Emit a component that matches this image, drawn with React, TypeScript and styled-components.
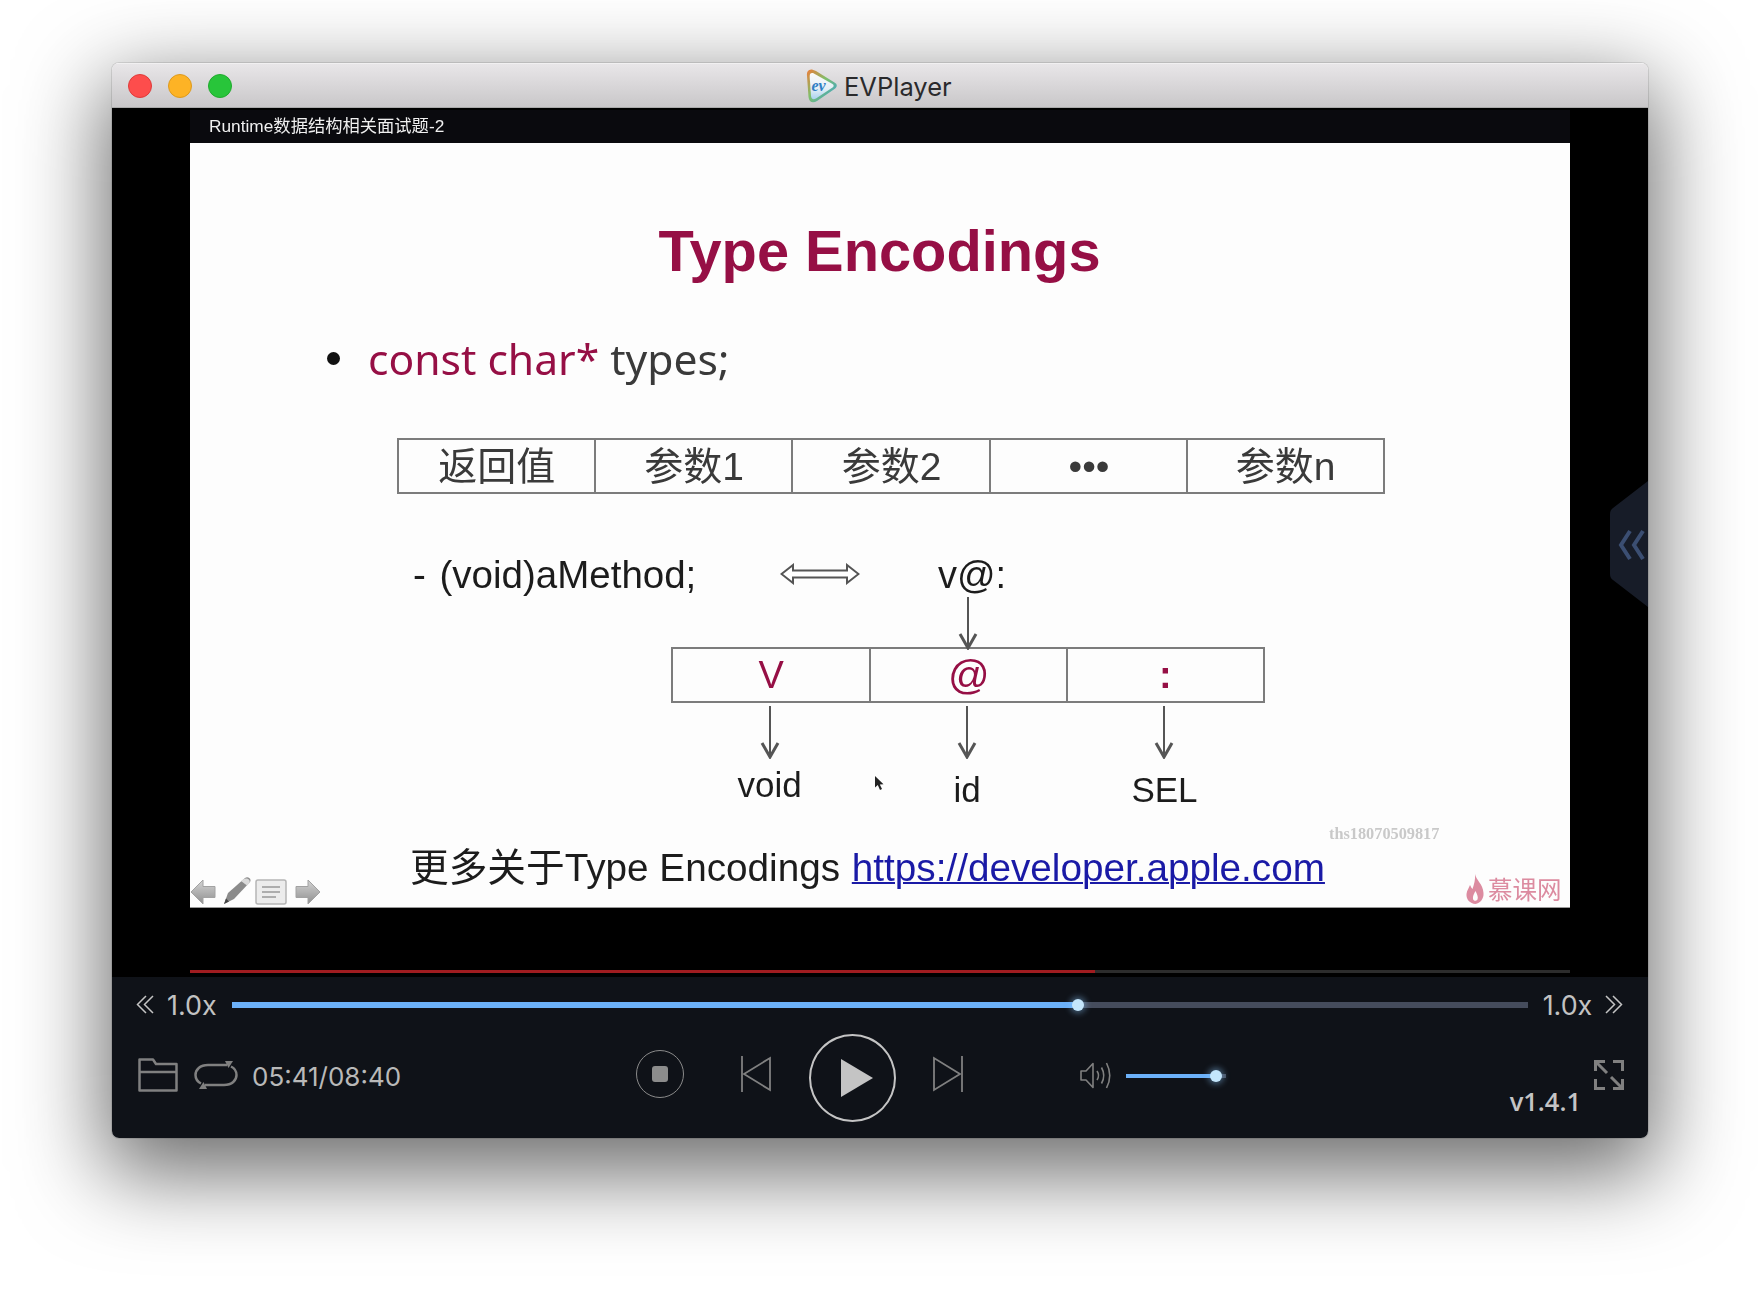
import React from 'react'
import styled, {createGlobalStyle} from 'styled-components'

const SANS = `"Liberation Sans", "Noto Sans CJK SC", sans-serif`
const UI = `Inter, "Noto Sans CJK SC", sans-serif`
const WINE = '#960f45'

const GlobalStyle = createGlobalStyle`
  html, body {
    margin: 0;
    background: #fff;
  }
  #root {
    height: 1298px;
    overflow: hidden;
  }
`

const Win = styled.div`
  position: relative;
  width: 1536px;
  height: 1075px;
  margin: 63px 0 0 112px;
  border-radius: 7px;
  overflow: hidden;
  display: flex;
  flex-direction: column;
  box-shadow: 0 0 0 1px rgba(0, 0, 0, 0.1), 0 28px 85px 8px rgba(0, 0, 0, 0.58);
`
const TitleBar = styled.div`
  position: relative;
  height: 45px;
  flex: none;
  box-sizing: border-box;
  background: linear-gradient(#e8e6e8, #c9c7c9);
  border-top: 1px solid #f1f0f1;
  border-bottom: 1px solid #aaa;
  display: flex;
  align-items: center;
  padding-left: 16px;
`
const Light = styled.span<{$bg: string; $edge: string}>`
  width: 24px;
  height: 24px;
  box-sizing: border-box;
  border-radius: 50%;
  background: ${p => p.$bg};
  border: 1px solid ${p => p.$edge};
  margin-right: 16px;
`
const TitleCenter = styled.div`
  position: absolute;
  left: 694px;
  top: 5px;
  display: flex;
  align-items: center;
  gap: 7px;
`
const TitleText = styled.span`
  font: 400 25.5px ${UI};
  color: #2a2a2c;
`

const Stage = styled.div`
  position: relative;
  height: 869px;
  flex: none;
  background: #000;
  padding: 2px 78px 0;
  box-sizing: border-box;
`
const Strip = styled.div`
  height: 33px;
  background: #0a0a0e;
  color: #f0f0f0;
  font: 400 17.3px/33px ${SANS};
  padding-left: 19px;
  filter: blur(0.3px);
`
const Slide = styled.div`
  position: relative;
  height: 765px;
  box-sizing: border-box;
  background: #fdfdfd;
  border-bottom: 1px solid #999;
  overflow: hidden;
  padding-top: 76px;
  > * {
    filter: blur(0.45px);
  }
`
const SlideTitle = styled.div`
  font: 700 57.8px/64px ${SANS};
  color: ${WINE};
  text-align: center;
  padding-right: 1px;
`
const BulletRow = styled.div`
  display: flex;
  align-items: center;
  margin: 45px 0 0 137px;
  font: 400 42.6px/60px "Noto Sans", sans-serif;
  color: #3a3a3a;
`
const Dot = styled.span`
  width: 13px;
  height: 13px;
  border-radius: 50%;
  background: #111;
  margin-right: 28px;
`
const Wine = styled.span`
  color: ${WINE};
`
const CellTable = styled.div<{$cols: number; $left: number}>`
  display: grid;
  grid-template-columns: 196.5px repeat(${p => p.$cols - 2}, 197.4px) 1fr;
  width: ${p => p.$cols * 197.4 + 1.5}px;
  height: 56px;
  box-sizing: border-box;
  margin-left: ${p => p.$left}px;
  border: 2px solid #7c7c7c;
`
const Cell = styled.div<{$wine?: boolean}>`
  display: flex;
  align-items: center;
  justify-content: center;
  font: 400 ${p => (p.$wine ? 38 : 39)}px/1 ${SANS};
  color: ${p => (p.$wine ? WINE : '#3a3a3a')};
  & + & {
    border-left: 2px solid #7c7c7c;
    margin-left: -1px;
  }
`
const AtSign = styled.span`
  font-size: 41px;
`
const HeaderCells = styled.div`
  margin-top: 50px;
`
const MethodRow = styled.div`
  display: grid;
  grid-template-columns: 367px 158px auto;
  align-items: center;
  margin: 59px 0 0 223px;
  font: 400 38px/44px ${SANS};
  color: #1c1c1c;
`
const MethodText = styled.span`
  font-size: 38.5px;
  word-spacing: 3px;
`
const DoubleArrow = styled.svg`
  margin-top: -2px;
`
const Pointer = styled.svg`
  display: block;
  margin-left: 768px;
  margin-bottom: -3px;
  position: relative;
  z-index: 1;
`
const Columns = styled.div`
  display: grid;
  grid-template-columns: repeat(3, 197.4px);
  margin-left: 481px;
`
const Column = styled.div`
  display: flex;
  flex-direction: column;
  align-items: center;
  padding-top: 3px;
`
const ArrowSvg = styled.svg`
  display: block;
`
const DownLabel = styled.div<{$gap: number}>`
  font: 400 35px/40px ${SANS};
  color: #1c1c1c;
  margin-top: ${p => p.$gap}px;
`
const Footer = styled.div`
  margin: 36px 0 0 220px;
  font: 400 38.7px/44px ${SANS};
  color: #1c1c1c;
`
const Link = styled.span`
  color: #1a1aa6;
  text-decoration: underline;
  text-decoration-thickness: 2px;
  margin-left: 1px;
`
const NavIcons = styled.div`
  position: absolute;
  left: 0;
  bottom: 2px;
  display: flex;
  align-items: flex-end;
`
const NavArrowIcon = styled.svg<{$flip?: boolean}>`
  transform: ${p => (p.$flip ? 'scaleX(-1)' : 'none')};
`
const PenIcon = styled.svg`
  margin: 0 2px 0 6px;
`
const ListIcon = styled.svg`
  margin-right: 7px;
`
const Watermark = styled.div`
  position: absolute;
  left: 1139px;
  top: 682px;
  font: 700 16.3px/18px "Liberation Serif", serif;
  color: #c9c9c9;
`
const Brand = styled.div`
  position: absolute;
  left: 1276px;
  top: 731px;
  display: flex;
  align-items: center;
  gap: 4px;
  font: 400 24.5px/30px "Noto Sans CJK SC", sans-serif;
  color: #dc8ba0;
`
const Cursor = styled.svg`
  position: absolute;
  left: 684px;
  top: 632px;
`
const ScrubTrack = styled.div`
  height: 3px;
  margin-top: 62px;
  background: #2c2c2c;
`
const ScrubFill = styled.div`
  height: 100%;
  background: #a01c20;
`
const SideTab = styled.svg`
  position: absolute;
  right: 0;
  top: 373px;
`

const Panel = styled.div`
  flex: 1;
  background: #0f1218;
  color: #c2c2c2;
  padding-top: 14px;
`
const SpeedRow = styled.div`
  display: flex;
  align-items: center;
  height: 28px;
  padding: 0 24px;
`
const Speed = styled.span`
  font: 400 26.9px/28px ${UI};
  margin: 0 12px;
`
const Track = styled.div`
  position: relative;
  height: 6px;
  background: #454c5c;
`
const SeekTrack = styled(Track)`
  width: 1296px;
  margin: 0 3px;
`
const VolumeTrack = styled(Track)`
  width: 100px;
  height: 4px;
  margin-left: 14px;
  margin-bottom: 4px;
`
const TrackFill = styled.div`
  height: 100%;
  background: #6cb1f9;
`
const Knob = styled.span`
  position: absolute;
  top: 50%;
  width: 12px;
  height: 12px;
  margin: -6.5px 0 0 -6px;
  border-radius: 50%;
  background: #c4e6fb;
  box-shadow: 0 0 6px 2px rgba(140, 200, 250, 0.45);
`
const ControlRow = styled.div`
  display: flex;
  align-items: center;
  height: 88px;
  margin-top: 15px;
  padding: 0 24px 0 26px;
`
const FileGroup = styled.div`
  display: flex;
  align-items: center;
  margin-bottom: 6px;
`
const FolderIcon = styled.svg`
  margin-right: 16px;
`
const Clock = styled.span`
  font: 400 26px/30px ${UI};
  margin: 3px 1px 0 14px;
  color: #b9b9b9;
  width: 148px;
  white-space: nowrap;
`
const Transport = styled.div`
  display: flex;
  align-items: center;
  margin-left: 235px;
`
const StopButton = styled.div`
  width: 48px;
  height: 48px;
  box-sizing: border-box;
  border: 1.5px solid #8a8a8a;
  border-radius: 50%;
  display: flex;
  align-items: center;
  justify-content: center;
  margin-bottom: 8px;
`
const StopSquare = styled.span`
  width: 16px;
  height: 16px;
  border-radius: 3px;
  background: #8c8c8c;
`
const PlayButton = styled.div`
  width: 87px;
  height: 88px;
  margin: 0 37px 0 38px;
  box-sizing: border-box;
  border: 2.5px solid #c4c4c4;
  border-radius: 50%;
  display: flex;
  align-items: center;
  justify-content: center;
  padding-left: 8px;
`
const SkipIcon = styled.svg<{$left?: number}>`
  margin-left: ${p => p.$left || 0}px;
  margin-bottom: 8px;
`
const VolumeGroup = styled.div`
  display: flex;
  align-items: center;
  margin-left: 117px;
`
const VolumeIcon = styled.svg`
  margin-bottom: 6px;
`
const RightGroup = styled.div`
  margin-left: auto;
  display: flex;
  gap: 13px;
  align-items: flex-start;
  align-self: flex-start;
  padding-top: 26px;
`
const Version = styled.span`
  font: 600 25.5px/28px "Open Sans", sans-serif;
  color: #c4c4c4;
  margin-top: 27px;
`

const Chevrons: React.FC<{dir: 'left' | 'right'}> = ({dir}) => (
  <svg width="19" height="20" viewBox="0 0 19 20" fill="none" stroke="#c4c4c4" strokeWidth="1.5">
    <g transform={dir === 'right' ? 'matrix(-1 0 0 1 19 0)' : undefined}>
      <path d="M10 1 L1.5 9.5 L10 18" />
      <path d="M17 1 L8.5 9.5 L17 18" />
    </g>
  </svg>
)

const DownArrow: React.FC<{h: number}> = ({h}) => (
  <ArrowSvg width="20" height={h} viewBox={`0 0 20 ${h}`} fill="none" stroke="#555">
    <path d={`M10 0 V${h - 2}`} strokeWidth="2" />
    <path d={`M2 ${h - 16} L10 ${h - 2} L18 ${h - 16}`} strokeWidth="3" />
  </ArrowSvg>
)

const AppLogo = () => (
  <svg width="31" height="34" viewBox="0 0 31 34">
    <defs>
      <linearGradient id="logoEdge" x1="0" y1="0" x2="1" y2="1">
        <stop offset="0" stopColor="#ee7d3a" />
        <stop offset="0.45" stopColor="#7fbf6a" />
        <stop offset="1" stopColor="#2f9fe0" />
      </linearGradient>
      <linearGradient id="logoFace" x1="0" y1="0" x2="0" y2="1">
        <stop offset="0" stopColor="#fbfbfb" />
        <stop offset="0.6" stopColor="#e4eef6" />
        <stop offset="1" stopColor="#a9d2ee" />
      </linearGradient>
    </defs>
    <path d="M6 0.5 C2 0 0.5 3 1 7 L2.5 28 C3 33.5 7 34.5 11 32 L28.5 20 C31.5 18 31.5 15 28.5 13.5 L10 2 Z" fill="url(#logoEdge)" />
    <path d="M7 4 C4.5 3.5 3.5 5 3.7 8 L5 27 C5.5 30.5 7.5 31 10 29.5 L26.5 18.5 C28 17.5 28 16 26.5 15 Z" fill="url(#logoFace)" />
    <text x="5.5" y="22" fontFamily="Liberation Serif, serif" fontStyle="italic" fontWeight="700" fontSize="16" fill="#2f7fc4">ev</text>
  </svg>
)

const NavArrow: React.FC<{flip?: boolean}> = ({flip}) => (
  <NavArrowIcon $flip={flip} width="27" height="26" viewBox="0 0 27 26">
    <defs>
      <linearGradient id="navArrow" x1="0" y1="0" x2="0" y2="1">
        <stop offset="0" stopColor="#d4d4d4" />
        <stop offset="1" stopColor="#8f8f8f" />
      </linearGradient>
    </defs>
    <path d="M1 13 L13 1 V7.5 H25 V18.5 H13 V25 Z" fill="url(#navArrow)" stroke="#a2a2a2" />
  </NavArrowIcon>
)

const Pen = () => (
  <PenIcon width="30" height="29" viewBox="0 0 30 29">
    <path d="M1 28 L5 17 L22 2 C25 0 29 3 27 6 L11 23 Z" fill="#8b8b8b" />
    <path d="M20 3.5 C23 1 28 3 26.5 7 L24 9.5 L18 5 Z" fill="#d9d9d9" />
    <path d="M1 28 L3 22.5 L6 25.5 Z" fill="#444" />
  </PenIcon>
)

const NavList = () => (
  <ListIcon width="32" height="26" viewBox="0 0 32 26">
    <rect x="1" y="1" width="30" height="24" rx="2" fill="#ececec" stroke="#b5b5b5" strokeWidth="1.5" />
    <path d="M7 8 H25 M7 13 H25 M7 18 H21" stroke="#adadad" strokeWidth="2" />
  </ListIcon>
)

const Flame = () => (
  <svg width="18" height="30" viewBox="0 0 18 30">
    <path
      d="M9 0 C10 6 17 10 17.5 19 C18 25 14 29 9.5 30 C4 29.5 0 25.5 0.5 20 C1 16 3 14 4 11 C5 13 5.5 14 6.5 15 C8 10 9.5 6 9 0 Z M9.5 17 C8 20 6.5 22 7 25 C7.5 27 10 27.5 11.5 25.5 C12.5 23 11 20 9.5 17 Z"
      fill="#dc8ba0"
      fillRule="evenodd"
    />
  </svg>
)

export default function App() {
  return (
    <>
      <GlobalStyle />
      <Win>
        <TitleBar>
          <Light $bg="#fd4d4c" $edge="#df3b3a" />
          <Light $bg="#fdb325" $edge="#dd9a1d" />
          <Light $bg="#28c53a" $edge="#20ab2e" />
          <TitleCenter>
            <AppLogo />
            <TitleText>EVPlayer</TitleText>
          </TitleCenter>
        </TitleBar>

        <Stage>
          <Strip>Runtime数据结构相关面试题-2</Strip>
          <Slide>
            <SlideTitle>Type Encodings</SlideTitle>
            <BulletRow>
              <Dot />
              <span>
                <Wine>const char*</Wine> types;
              </span>
            </BulletRow>
            <HeaderCells>
              <CellTable $cols={5} $left={206.5}>
                <Cell>返回值</Cell>
                <Cell>参数1</Cell>
                <Cell>参数2</Cell>
                <Cell>•••</Cell>
                <Cell>参数n</Cell>
              </CellTable>
            </HeaderCells>
            <MethodRow>
              <MethodText>- (void)aMethod;</MethodText>
              <DoubleArrow width="80" height="22" viewBox="0 0 80 22" fill="#fff" stroke="#555" strokeWidth="2">
                <path d="M1.5 11 L13 2 V7.5 H67 V2 L78.5 11 L67 20 V14.5 H13 V20 Z" />
              </DoubleArrow>
              <span>v@:</span>
            </MethodRow>
            <Pointer width="20" height="53" viewBox="0 0 20 53" fill="none" stroke="#555">
              <path d="M10 0 V51" strokeWidth="2" />
              <path d="M2 37 L10 51 L18 37" strokeWidth="3" />
            </Pointer>
            <CellTable $cols={3} $left={481}>
              <Cell $wine>V</Cell>
              <Cell $wine>
                <AtSign>@</AtSign>
              </Cell>
              <Cell $wine>
                <b>:</b>
              </Cell>
            </CellTable>
            <Columns>
              <Column>
                <DownArrow h={53} />
                <DownLabel $gap={6}>void</DownLabel>
              </Column>
              <Column>
                <DownArrow h={53} />
                <DownLabel $gap={11}>id</DownLabel>
              </Column>
              <Column>
                <DownArrow h={53} />
                <DownLabel $gap={11}>SEL</DownLabel>
              </Column>
            </Columns>
            <Footer>
              更多关于Type Encodings <Link>https://developer.apple.com</Link>
            </Footer>
            <NavIcons>
              <NavArrow />
              <Pen />
              <NavList />
              <NavArrow flip />
            </NavIcons>
            <Watermark>ths18070509817</Watermark>
            <Brand>
              <Flame />
              慕课网
            </Brand>
            <Cursor width="11" height="16" viewBox="0 0 11 16">
              <path d="M1 1 V12.5 L3.8 10 L6 15 L8 14 L5.8 9.5 L9.5 9.2 Z" fill="#222" />
            </Cursor>
          </Slide>
          <ScrubTrack>
            <ScrubFill style={{width: `${(905 / 1380) * 100}%`}} />
          </ScrubTrack>
          <SideTab width="38" height="126" viewBox="0 0 38 126">
            <path d="M38 0 L3 27 Q0 29 0 33 V93 Q0 97 3 99 L38 126 Z" fill="#171c28" />
            <path d="M20 50 L11 64 L20 78 M33 50 L24 64 L33 78" fill="none" stroke="#3b4e72" strokeWidth="4" />
          </SideTab>
        </Stage>

        <Panel>
          <SpeedRow>
            <Chevrons dir="left" />
            <Speed>1.0x</Speed>
            <SeekTrack>
              <TrackFill style={{width: `${(846 / 1296) * 100}%`}} />
              <Knob style={{left: '65.3%'}} />
            </SeekTrack>
            <Speed>1.0x</Speed>
            <Chevrons dir="right" />
          </SpeedRow>

          <ControlRow>
            <FileGroup>
              <FolderIcon width="40" height="34" viewBox="0 0 40 34" fill="none" stroke="#808080" strokeWidth="2.5">
                <path d="M1.5 32.5 V1.5 H15 L18 6 H38.5 V32.5 Z" strokeLinejoin="round" />
                <path d="M1.5 14 H38.5" />
              </FolderIcon>
              <svg width="44" height="30" viewBox="0 0 44 30" fill="none" stroke="#808080" strokeWidth="2.5">
                <path d="M33 5 H14 C6 5 1.5 9.5 1.5 15 C1.5 19 4 22 7 23.5" />
                <path d="M11 25 H30 C38 25 42.5 20.5 42.5 15 C42.5 11 40 8 37 6.5" />
                <path d="M31 1 L39 1 L34.5 8 Z" fill="#808080" stroke="none" />
                <path d="M13 29 L5 29 L9.5 22 Z" fill="#808080" stroke="none" />
              </svg>
              <Clock>05:41/08:40</Clock>
            </FileGroup>

            <Transport>
              <StopButton>
                <StopSquare />
              </StopButton>
              <SkipIcon $left={57} width="30" height="36" viewBox="0 0 30 36" fill="none" stroke="#808080" strokeWidth="1.8">
                <path d="M1 0 V36" />
                <path d="M29 2 V34 L3 18 Z" />
              </SkipIcon>
              <PlayButton>
                <svg width="32" height="38" viewBox="0 0 32 38">
                  <path d="M0 0 L32 19 L0 38 Z" fill="#c4c4c4" />
                </svg>
              </PlayButton>
              <SkipIcon width="30" height="36" viewBox="0 0 30 36" fill="none" stroke="#808080" strokeWidth="1.8">
                <path d="M29 0 V36" />
                <path d="M1 2 V34 L27 18 Z" />
              </SkipIcon>
            </Transport>

            <VolumeGroup>
              <VolumeIcon width="32" height="27" viewBox="0 0 32 27" fill="none" stroke="#808080" strokeWidth="1.6">
                <path d="M1 9 H6 L13 1.5 V25.5 L6 18 H1 Z" strokeLinejoin="round" />
                <path d="M17 9 Q20 13.5 17 18" />
                <path d="M21.5 5.5 Q26 13.5 21.5 21.5" />
                <path d="M26.5 1 Q33 13.5 26.5 26" />
              </VolumeIcon>
              <VolumeTrack>
                <TrackFill style={{width: '90%'}} />
                <Knob style={{left: '90%'}} />
              </VolumeTrack>
            </VolumeGroup>

            <RightGroup>
              <Version>v1.4.1</Version>
              <svg width="30" height="30" viewBox="0 0 30 30" fill="none" stroke="#808080" strokeWidth="3">
                <path d="M1.5 11 V1.5 H11" />
                <path d="M19 1.5 H28.5 V11" />
                <path d="M1.5 19 V28.5 H11" />
                <path d="M19 28.5 H28.5 V19" />
                <path d="M3 3 L13 13" />
                <path d="M27 27 L17 17" />
              </svg>
            </RightGroup>
          </ControlRow>
        </Panel>
      </Win>
    </>
  )
}
